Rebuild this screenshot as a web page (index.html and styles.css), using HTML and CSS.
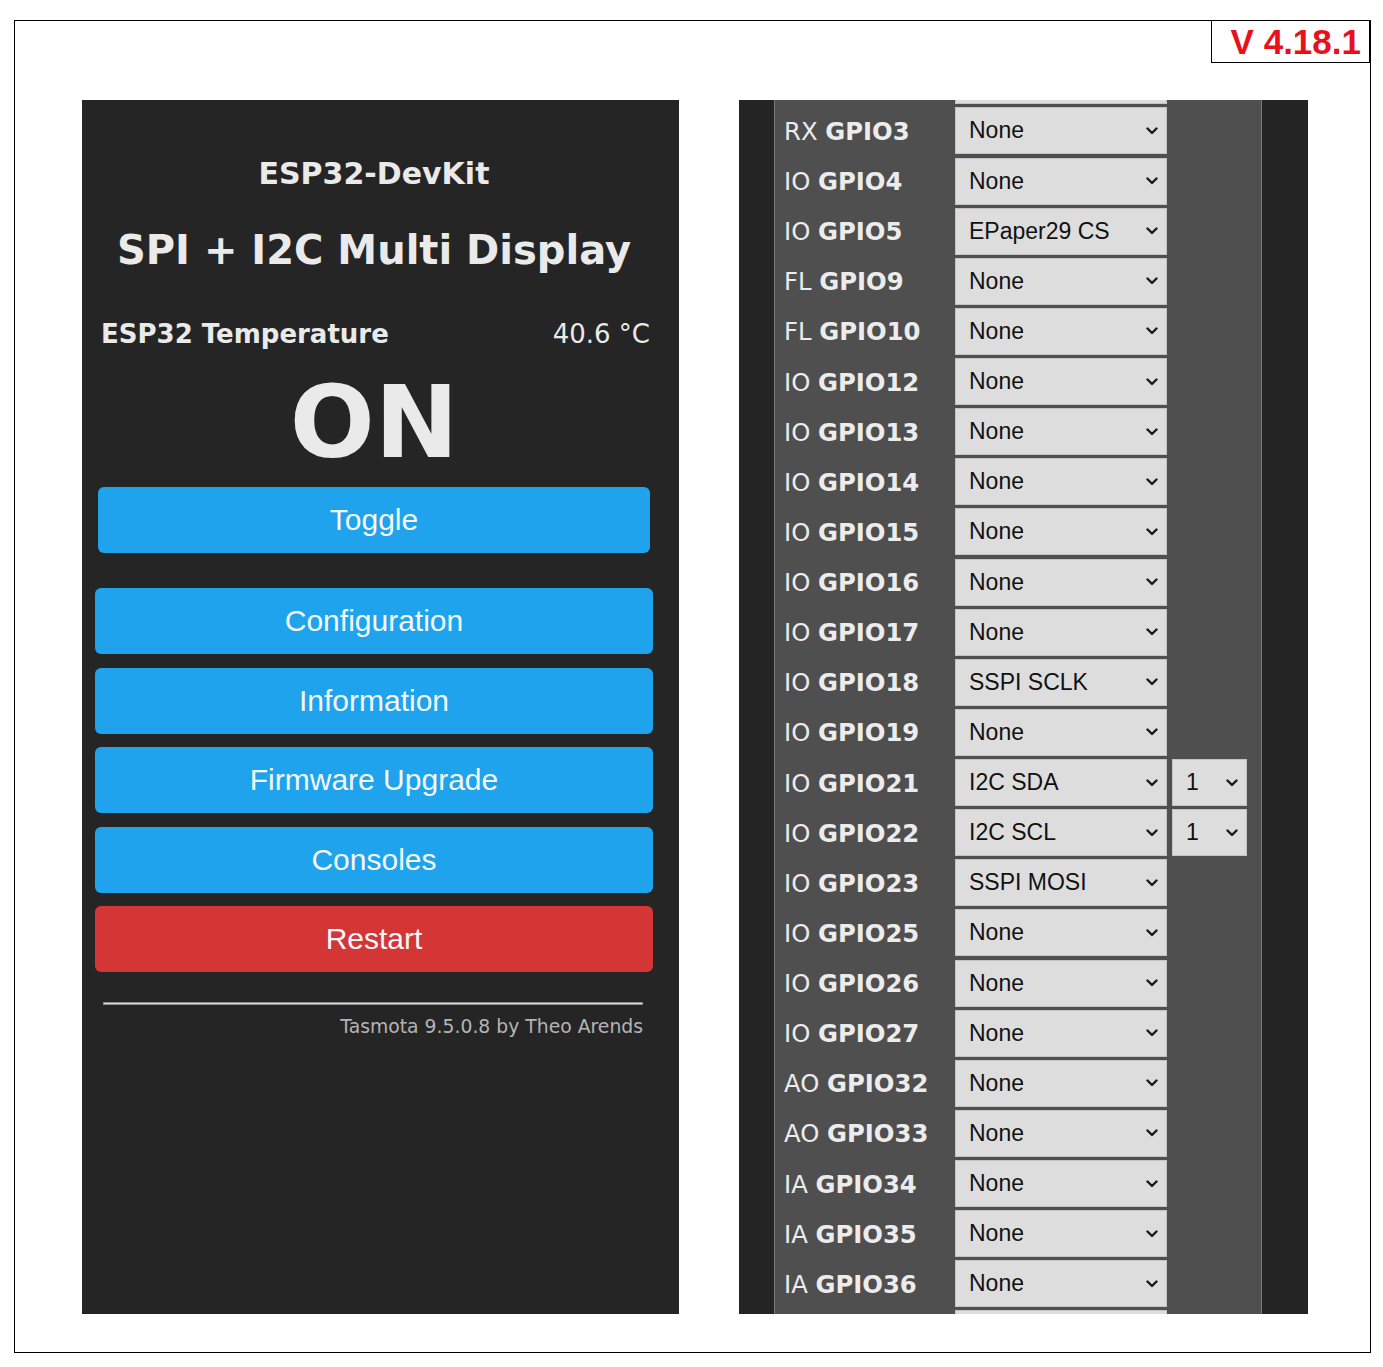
FILE: index.html
```html
<!DOCTYPE html>
<html>
<head>
<meta charset="utf-8">
<title>Tasmota</title>
<link rel="stylesheet" href="styles.css">
</head>
<body>
<div class="frame">
  <div class="version">V 4.18.1</div>
  <div class="panels">
    <div class="main-panel">
      <div class="dev-name">ESP32-DevKit</div>
      <div class="dev-title">SPI + I2C Multi Display</div>
      <div class="sensor-row"><span class="sensor-label">ESP32 Temperature</span><span class="sensor-value">40.6 °C</span></div>
      <div class="power-state">ON</div>
      <div class="btn btn-toggle">Toggle</div>
      <div class="menu">
        <div class="btn">Configuration</div>
        <div class="btn">Information</div>
        <div class="btn">Firmware Upgrade</div>
        <div class="btn">Consoles</div>
        <div class="btn btn-red">Restart</div>
      </div>
      <div class="rule"></div>
      <div class="footer">Tasmota 9.5.0.8 by Theo Arends</div>
    </div>
    <div class="gpio-panel">
      <div class="gpio-col">
        <div class="gpio-list">
          <div class="row"><div class="lbl"></div><div class="sel"></div></div>
          <div class="row"><div class="lbl">RX <b>GPIO3</b></div><div class="sel"><span>None</span><svg class="chev" width="12" height="8" viewBox="0 0 12 8"><polyline points="1.5,1.5 6,6 10.5,1.5"/></svg></div></div>
          <div class="row"><div class="lbl">IO <b>GPIO4</b></div><div class="sel"><span>None</span><svg class="chev" width="12" height="8" viewBox="0 0 12 8"><polyline points="1.5,1.5 6,6 10.5,1.5"/></svg></div></div>
          <div class="row"><div class="lbl">IO <b>GPIO5</b></div><div class="sel"><span>EPaper29 CS</span><svg class="chev" width="12" height="8" viewBox="0 0 12 8"><polyline points="1.5,1.5 6,6 10.5,1.5"/></svg></div></div>
          <div class="row"><div class="lbl">FL <b>GPIO9</b></div><div class="sel"><span>None</span><svg class="chev" width="12" height="8" viewBox="0 0 12 8"><polyline points="1.5,1.5 6,6 10.5,1.5"/></svg></div></div>
          <div class="row"><div class="lbl">FL <b>GPIO10</b></div><div class="sel"><span>None</span><svg class="chev" width="12" height="8" viewBox="0 0 12 8"><polyline points="1.5,1.5 6,6 10.5,1.5"/></svg></div></div>
          <div class="row"><div class="lbl">IO <b>GPIO12</b></div><div class="sel"><span>None</span><svg class="chev" width="12" height="8" viewBox="0 0 12 8"><polyline points="1.5,1.5 6,6 10.5,1.5"/></svg></div></div>
          <div class="row"><div class="lbl">IO <b>GPIO13</b></div><div class="sel"><span>None</span><svg class="chev" width="12" height="8" viewBox="0 0 12 8"><polyline points="1.5,1.5 6,6 10.5,1.5"/></svg></div></div>
          <div class="row"><div class="lbl">IO <b>GPIO14</b></div><div class="sel"><span>None</span><svg class="chev" width="12" height="8" viewBox="0 0 12 8"><polyline points="1.5,1.5 6,6 10.5,1.5"/></svg></div></div>
          <div class="row"><div class="lbl">IO <b>GPIO15</b></div><div class="sel"><span>None</span><svg class="chev" width="12" height="8" viewBox="0 0 12 8"><polyline points="1.5,1.5 6,6 10.5,1.5"/></svg></div></div>
          <div class="row"><div class="lbl">IO <b>GPIO16</b></div><div class="sel"><span>None</span><svg class="chev" width="12" height="8" viewBox="0 0 12 8"><polyline points="1.5,1.5 6,6 10.5,1.5"/></svg></div></div>
          <div class="row"><div class="lbl">IO <b>GPIO17</b></div><div class="sel"><span>None</span><svg class="chev" width="12" height="8" viewBox="0 0 12 8"><polyline points="1.5,1.5 6,6 10.5,1.5"/></svg></div></div>
          <div class="row"><div class="lbl">IO <b>GPIO18</b></div><div class="sel"><span>SSPI SCLK</span><svg class="chev" width="12" height="8" viewBox="0 0 12 8"><polyline points="1.5,1.5 6,6 10.5,1.5"/></svg></div></div>
          <div class="row"><div class="lbl">IO <b>GPIO19</b></div><div class="sel"><span>None</span><svg class="chev" width="12" height="8" viewBox="0 0 12 8"><polyline points="1.5,1.5 6,6 10.5,1.5"/></svg></div></div>
          <div class="row"><div class="lbl">IO <b>GPIO21</b></div><div class="sel"><span>I2C SDA</span><svg class="chev" width="12" height="8" viewBox="0 0 12 8"><polyline points="1.5,1.5 6,6 10.5,1.5"/></svg></div><div class="sel sel-small"><span>1</span><svg class="chev" width="12" height="8" viewBox="0 0 12 8"><polyline points="1.5,1.5 6,6 10.5,1.5"/></svg></div></div>
          <div class="row"><div class="lbl">IO <b>GPIO22</b></div><div class="sel"><span>I2C SCL</span><svg class="chev" width="12" height="8" viewBox="0 0 12 8"><polyline points="1.5,1.5 6,6 10.5,1.5"/></svg></div><div class="sel sel-small"><span>1</span><svg class="chev" width="12" height="8" viewBox="0 0 12 8"><polyline points="1.5,1.5 6,6 10.5,1.5"/></svg></div></div>
          <div class="row"><div class="lbl">IO <b>GPIO23</b></div><div class="sel"><span>SSPI MOSI</span><svg class="chev" width="12" height="8" viewBox="0 0 12 8"><polyline points="1.5,1.5 6,6 10.5,1.5"/></svg></div></div>
          <div class="row"><div class="lbl">IO <b>GPIO25</b></div><div class="sel"><span>None</span><svg class="chev" width="12" height="8" viewBox="0 0 12 8"><polyline points="1.5,1.5 6,6 10.5,1.5"/></svg></div></div>
          <div class="row"><div class="lbl">IO <b>GPIO26</b></div><div class="sel"><span>None</span><svg class="chev" width="12" height="8" viewBox="0 0 12 8"><polyline points="1.5,1.5 6,6 10.5,1.5"/></svg></div></div>
          <div class="row"><div class="lbl">IO <b>GPIO27</b></div><div class="sel"><span>None</span><svg class="chev" width="12" height="8" viewBox="0 0 12 8"><polyline points="1.5,1.5 6,6 10.5,1.5"/></svg></div></div>
          <div class="row"><div class="lbl">AO <b>GPIO32</b></div><div class="sel"><span>None</span><svg class="chev" width="12" height="8" viewBox="0 0 12 8"><polyline points="1.5,1.5 6,6 10.5,1.5"/></svg></div></div>
          <div class="row"><div class="lbl">AO <b>GPIO33</b></div><div class="sel"><span>None</span><svg class="chev" width="12" height="8" viewBox="0 0 12 8"><polyline points="1.5,1.5 6,6 10.5,1.5"/></svg></div></div>
          <div class="row"><div class="lbl">IA <b>GPIO34</b></div><div class="sel"><span>None</span><svg class="chev" width="12" height="8" viewBox="0 0 12 8"><polyline points="1.5,1.5 6,6 10.5,1.5"/></svg></div></div>
          <div class="row"><div class="lbl">IA <b>GPIO35</b></div><div class="sel"><span>None</span><svg class="chev" width="12" height="8" viewBox="0 0 12 8"><polyline points="1.5,1.5 6,6 10.5,1.5"/></svg></div></div>
          <div class="row"><div class="lbl">IA <b>GPIO36</b></div><div class="sel"><span>None</span><svg class="chev" width="12" height="8" viewBox="0 0 12 8"><polyline points="1.5,1.5 6,6 10.5,1.5"/></svg></div></div>
          <div class="row"><div class="lbl"></div><div class="sel"></div></div>
        </div>
      </div>
    </div>
  </div>
</div>
</body>
</html>
```

FILE: styles.css
```css
* { box-sizing: border-box; }

body {
  margin: 0;
  background: #ffffff;
  font-family: "DejaVu Sans", Verdana, sans-serif;
}

.frame {
  position: relative;
  margin: 20px 0 0 14px;
  width: 1357px;
  height: 1333px;
  border: 1px solid #000;
  padding: 79px 0 0 67px;
}

.version {
  position: absolute;
  top: -1px;
  right: 0;
  width: 159px;
  height: 43px;
  border: 1px solid #000;
  background: #fff;
  color: #e8101a;
  font-family: "Liberation Sans", Arial, sans-serif;
  font-weight: bold;
  font-size: 35px;
  line-height: 41px;
  text-align: right;
  padding-right: 8px;
}

.panels {
  display: flex;
  gap: 60px;
  align-items: flex-start;
}

/* ---------- main panel ---------- */
.main-panel {
  width: 597px;
  height: 1214px;
  background: #252525;
  color: #eaeaea;
  padding: 0 26px 0 13px;
  display: flex;
  flex-direction: column;
}

.dev-name {
  margin-top: 54px;
  font-size: 30px;
  line-height: 40px;
  font-weight: bold;
  text-align: center;
}

.dev-title {
  margin-top: 31px;
  font-size: 40px;
  line-height: 50px;
  font-weight: bold;
  text-align: center;
}

.sensor-row {
  margin-top: 42px;
  display: flex;
  justify-content: space-between;
  padding: 0 3px 0 6px;
  font-size: 26px;
  line-height: 34px;
}

.sensor-label { font-weight: bold; }

.power-state {
  margin-top: 21px;
  font-size: 100px;
  line-height: 102px;
  font-weight: bold;
  text-align: center;
}

.btn {
  height: 66px;
  border-radius: 6px;
  background: #1fa3ec;
  color: #f4f8fb;
  font-family: "Liberation Sans", Arial, sans-serif;
  font-size: 30px;
  line-height: 66px;
  text-align: center;
}

.btn-toggle {
  margin: 13px 3px 0 3px;
}

.menu {
  margin-top: 35px;
  display: flex;
  flex-direction: column;
  gap: 13.6px;
}

.btn-red { background: #d43535; }

.rule {
  margin: 30px 10px 0 8px;
  height: 3px;
  border: 1px solid #8a8a8a;
  background: #dcdcdc;
}

.footer {
  margin: 11px 10px 0 0;
  text-align: right;
  font-size: 18.8px;
  line-height: 22px;
  color: #b4b4b4;
}

/* ---------- gpio panel ---------- */
.gpio-panel {
  width: 569px;
  height: 1214px;
  background: #242424;
  padding: 0 46px 0 35px;
  overflow: hidden;
}

.gpio-col {
  height: 100%;
  background: #4f4f4f;
  border-left: 1px solid #7a7a7a;
  border-right: 1px solid #7a7a7a;
  padding-left: 9px;
  overflow: hidden;
}

.gpio-list {
  margin-top: -44.3px;
}

.row {
  height: 50.13px;
  display: flex;
  align-items: center;
}

.lbl {
  width: 171px;
  flex: none;
  color: #ececec;
  font-size: 24.3px;
  line-height: 30px;
  padding-top: 2px;
  white-space: nowrap;
}

.lbl b { font-weight: bold; }

.sel {
  width: 212px;
  height: 47px;
  flex: none;
  background: #dddddd;
  border: 1px solid #c4c4c4;
  display: flex;
  align-items: center;
  justify-content: space-between;
  padding: 0 8px 0 13px;
  font-family: "Liberation Sans", Arial, sans-serif;
  font-size: 23px;
  color: #111;
}

.sel-small {
  width: 75px;
  margin-left: 5px;
}

.chev {
  flex: none;
  fill: none;
  stroke: #1a1a1a;
  stroke-width: 2.4;
  stroke-linecap: round;
  stroke-linejoin: round;
}
```
